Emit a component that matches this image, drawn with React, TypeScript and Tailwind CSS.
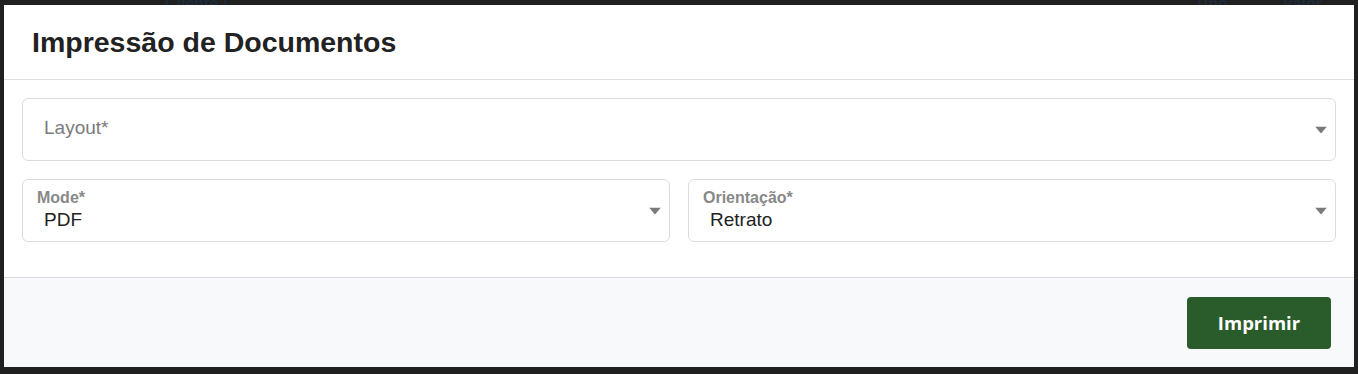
import React from "react";

function Caret() {
  return (
    <svg width="12" height="7" viewBox="0 0 12 7" className="absolute right-[8px] top-1/2 -translate-y-1/2">
      <path d="M0 0 L12 0 L6 7 Z" fill="#7a7a7a" />
    </svg>
  );
}

function SelectBox({ label, value, placeholder }: { label?: string; value?: string; placeholder?: string }) {
  return (
    <div className="relative h-[63px] rounded-[6px] border border-[#dcdcdc] bg-white">
      {placeholder ? (
        <div className="flex h-full items-center pb-[2px] pl-[21px] text-[19px] text-[#7b7b7b]">{placeholder}</div>
      ) : (
        <div className="flex h-full flex-col pl-[14px] pt-[9px]">
          <span className="text-[16px] font-bold leading-[18px] text-[#888888]">{label}</span>
          <span className="pl-[7px] text-[19px] leading-[26px] text-[#222222]">{value}</span>
        </div>
      )}
      <Caret />
    </div>
  );
}

export default function App() {
  return (
    <div className="relative h-[374px] w-[1358px] overflow-hidden bg-[#202020] font-['Liberation_Sans',Arial,sans-serif]">
      {/* page behind the backdrop */}
      <div className="absolute left-0 top-[-8px] flex w-full text-[16px] font-bold text-[#1d2a3a]">
        <span className="ml-[165px]">Cliente /</span>
        <span className="ml-auto">Tipo</span>
        <span className="ml-[55px] mr-[36px]">Valor</span>
      </div>

      <div className="relative ml-[4px] mt-[5px] flex w-[1350px] flex-col bg-white">
        <div className="flex h-[75px] items-center border-b border-[#dedede] pl-[28px]">
          <h1 className="text-[28.5px] font-bold text-[#222222]">Impressão de Documentos</h1>
        </div>

        <div className="flex flex-col gap-[18px] px-[18px] pb-[35px] pt-[18px]">
          <SelectBox placeholder="Layout*" />
          <div className="grid grid-cols-2 gap-[18px]">
            <SelectBox label="Mode*" value="PDF" />
            <SelectBox label="Orientação*" value="Retrato" />
          </div>
        </div>

        <div className="flex h-[90px] items-center justify-end border-t border-[#d6d8db] bg-[#f8f9fa] pr-[23px]">
          <button className="h-[52px] w-[144px] rounded-[4px] bg-[#2a5b2a] font-['Open_Sans',sans-serif] text-[18.5px] font-bold text-white">
            Imprimir
          </button>
        </div>
      </div>
    </div>
  );
}
